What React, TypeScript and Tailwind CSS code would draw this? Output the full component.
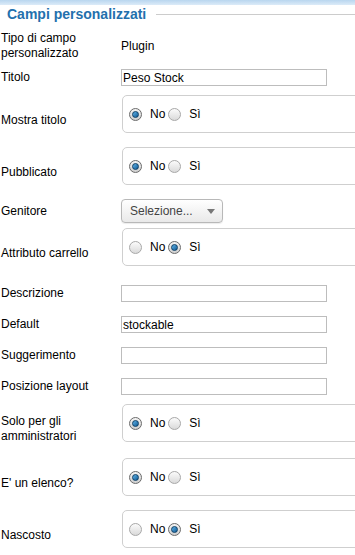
import React from "react"

const font = { fontFamily: '"Liberation Sans", Arial, sans-serif' }

const Radio = ({ checked }: { checked?: boolean }) => (
    <span className={`relative inline-flex size-[13px] items-center justify-center rounded-full border ${checked ? "border-[#6b6b6b] bg-gradient-to-b from-[#f4f4f4] to-[#cfcfcf]" : "border-[#a8a8a8] bg-gradient-to-b from-[#fbfbfb] to-[#dadada]"}`}>
        {checked && <span className="size-[7px] rounded-full border border-[#0c3f66] bg-gradient-to-br from-[#5fb3e8] to-[#0b5a94]" />}
    </span>
)

const RadioBox = ({ yes, labelPad = "pt-[18px]", label }: { yes?: boolean; labelPad?: string; label: React.ReactNode }) => (
    <div className="flex items-start">
        <div className={`w-[121px] shrink-0 pl-[1px] leading-[15px] ${labelPad}`}>{label}</div>
        <div className="ml-[1px] flex h-[38px] w-[260px] shrink-0 items-center rounded-[5px] border border-[#cfcfcf] pl-[6px]">
            <Radio checked={!yes} />
            <span className="ml-[8px]">No</span>
            <span className="ml-[3px] flex"><Radio checked={yes} /></span>
            <span className="ml-[8px]">Sì</span>
        </div>
    </div>
)

const TextRow = ({ label, value = "" }: { label: string; value?: string }) => (
    <div className="flex items-center">
        <div className="w-[121px] shrink-0 pl-[1px] leading-[15px]">{label}</div>
        <div className="flex h-[17px] w-[206px] items-center border border-[#bdbdbd] bg-white pl-[1px] text-black">{value}</div>
    </div>
)

export default function App() {
    return (
        <div className="w-[355px] h-[555px] overflow-hidden bg-white text-[12px] text-black" style={font}>
            <div className="h-[5px] bg-gradient-to-b from-[#b9d6ef] to-[#dcebf8]" />
            <div className="flex h-[18px] items-center">
                <span className="pl-[7px] text-[14px] font-bold text-[#2370ad]">Campi personalizzati</span>
                <div className="ml-[10px] h-px flex-1 bg-[#cccccc]" />
            </div>

            <div className="mt-[8px] flex items-center">
                <div className="w-[121px] shrink-0 pl-[1px] leading-[15px]">Tipo di campo<br />personalizzato</div>
                <div>Plugin</div>
            </div>

            <div className="mt-[8px]"><TextRow label="Titolo" value="Peso Stock" /></div>
            <div className="mt-[9px]"><RadioBox label="Mostra titolo" /></div>
            <div className="mt-[14px]"><RadioBox label="Pubblicato" /></div>

            <div className="mt-[14px] flex items-center">
                <div className="w-[121px] shrink-0 pl-[1px] leading-[15px]">Genitore</div>
                <div className="flex h-[24px] w-[102px] items-center justify-between rounded-[4px] border border-[#b8b8b8] bg-gradient-to-b from-white to-[#e9e9e9] pl-[8px] pr-[7px] text-[#444] shadow-[0_1px_1px_rgba(0,0,0,0.08)]">
                    <span>Selezione...</span>
                    <span className="h-0 w-0 border-x-[4px] border-t-[5px] border-x-transparent border-t-[#777]" />
                </div>
            </div>

            <div className="mt-[5px]"><RadioBox label="Attributo carrello" yes /></div>
            <div className="mt-[19px]"><TextRow label="Descrizione" /></div>
            <div className="mt-[14px]"><TextRow label="Default" value="stockable" /></div>
            <div className="mt-[14px]"><TextRow label="Suggerimento" /></div>
            <div className="mt-[14px]"><TextRow label="Posizione layout" /></div>
            <div className="mt-[9px]"><RadioBox label={<>Solo per gli<br />amministratori</>} labelPad="pt-[10px]" /></div>
            <div className="mt-[14px]"><RadioBox label="E' un elenco?" /></div>
            <div className="mt-[14px]"><RadioBox label="Nascosto" yes /></div>
        </div>
    )
}
